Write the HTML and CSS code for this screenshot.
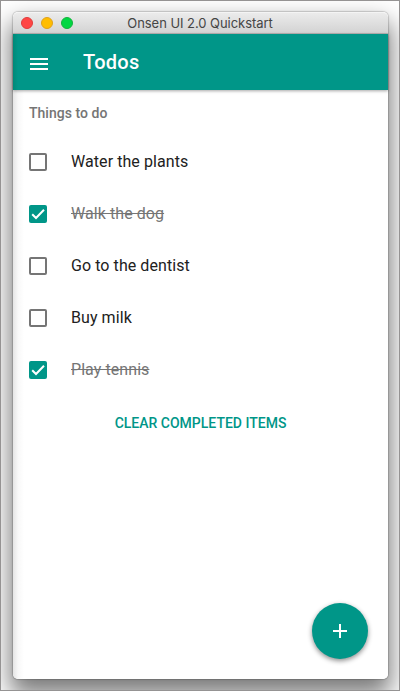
FILE: index.html
```html
<!DOCTYPE html>
<html lang="en">
<head>
<meta charset="utf-8">
<title>Onsen UI 2.0 Quickstart</title>
<link rel="stylesheet" href="styles.css">
</head>
<body>
<div class="desktop">
  <div class="window">
    <div class="titlebar">
      <div class="lights"><i class="light red"></i><i class="light yellow"></i><i class="light green"></i></div>
      <span class="window-title">Onsen UI 2.0 Quickstart</span>
    </div>
    <div class="page">
      <header class="toolbar">
        <svg class="menu" width="18" height="12" viewBox="0 0 18 12"><path d="M0 0h18v2H0zM0 5h18v2H0zM0 10h18v2H0z" fill="#fff"/></svg>
        <h1>Todos</h1>
      </header>
      <h2>Things to do</h2>
      <ul class="list">
        <li><span class="box"></span><span class="label">Water the plants</span></li>
        <li class="done"><span class="box"><svg width="18" height="18" viewBox="0 0 18 18"><path d="M3.2 9.2 7 13l8-8.200" fill="none" stroke="#fff" stroke-width="2"/></svg></span><span class="label">Walk the dog</span></li>
        <li><span class="box"></span><span class="label">Go to the dentist</span></li>
        <li><span class="box"></span><span class="label">Buy milk</span></li>
        <li class="done"><span class="box"><svg width="18" height="18" viewBox="0 0 18 18"><path d="M3.2 9.2 7 13l8-8.200" fill="none" stroke="#fff" stroke-width="2"/></svg></span><span class="label">Play tennis</span></li>
      </ul>
      <button class="clear">Clear completed items</button>
      <button class="fab" aria-label="Add"><svg width="14" height="14" viewBox="0 0 14 14"><path d="M6 0h2v6h6v2H8v6H6V8H0V6h6z" fill="#fff"/></svg></button>
    </div>
  </div>
</div>
</body>
</html>
```
FILE: styles.css
```css
* { box-sizing: border-box; }
body { margin: 0; font-family: Roboto, sans-serif; }
.desktop {
  height: 691px;
  padding: 11px 11px 11px 12px;
  border: 1px solid #959393;
  background: #fff;
  overflow: hidden;
}
.window {
  position: relative;
  width: 375px;
  height: 667px;
  border-radius: 5px;
  box-shadow: 0 0 1px 1px rgba(0,0,0,.17), 0 13px 24px 3px rgba(0,0,0,.52);
}
.titlebar {
  display: flex;
  align-items: center;
  justify-content: center;
  position: relative;
  height: 22px;
  border-radius: 5px 5px 0 0;
  background: linear-gradient(#ebebeb, #d3d3d3);
  border-top: 1px solid #f4f4f4;
  border-bottom: 1px solid #b7b3b3;
}
.lights { position: absolute; left: 8px; top: 4px; display: flex; gap: 8px; }
.light { width: 12px; height: 12px; border-radius: 50%; border: 1px solid; }
.red { background: #ff4544; border-color: #e03c3b; }
.yellow { background: #ffbd00; border-color: #e0a21a; }
.green { background: #00d742; border-color: #13b33d; }
.window-title { font: 13px/20px Inter, sans-serif; color: #454545; letter-spacing: -.05px; margin-left: -1px; }
.page {
  position: relative;
  height: 645px;
  background: linear-gradient(90deg, #e5e5e5, #f8f8f8 5px, #fff 11px);
  border-radius: 0 0 5px 5px;
}
.toolbar {
  display: flex;
  align-items: center;
  height: 56px;
  padding: 3px 17px 0;
  background: linear-gradient(90deg, #008978, #009688 5px);
  color: #fff;
  box-shadow: 0 1px 3px rgba(0,0,0,.35);
}
.toolbar h1 { margin: -4px 0 0 35px; font-size: 20px; line-height: 24px; font-weight: 500; letter-spacing: .3px; }
h2 { margin: 0; padding: 14px 16px 0; font-size: 14px; line-height: 18px; font-weight: 500; color: #757575; letter-spacing: .03px; }
.list { list-style: none; margin: 14px 0 0; padding: 0; }
.list li { display: flex; align-items: center; height: 52px; padding-left: 16px; font-size: 16px; line-height: 20px; color: #212121; }
.box { width: 18px; height: 18px; border: 2px solid #757575; border-radius: 2px; margin-right: 24px; }
.label { margin-top: -1px; letter-spacing: .07px; }
.done .box { border: 0; background: #009688; }
.done .box svg { display: block; }
.done .label { color: #757575; text-decoration: line-through; }
button { border: 0; padding: 0; font-family: inherit; }
.clear { display: block; width: 100%; height: 36px; margin-top: 9px; background: none; color: #009688; font-size: 14px; font-weight: 500; text-transform: uppercase; }
.fab {
  position: absolute;
  right: 20px;
  bottom: 20px;
  width: 56px;
  height: 56px;
  display: flex;
  align-items: center;
  justify-content: center;
  border-radius: 50%;
  background: #009688;
  box-shadow: 0 2px 5px rgba(0,0,0,.45);
}
```
